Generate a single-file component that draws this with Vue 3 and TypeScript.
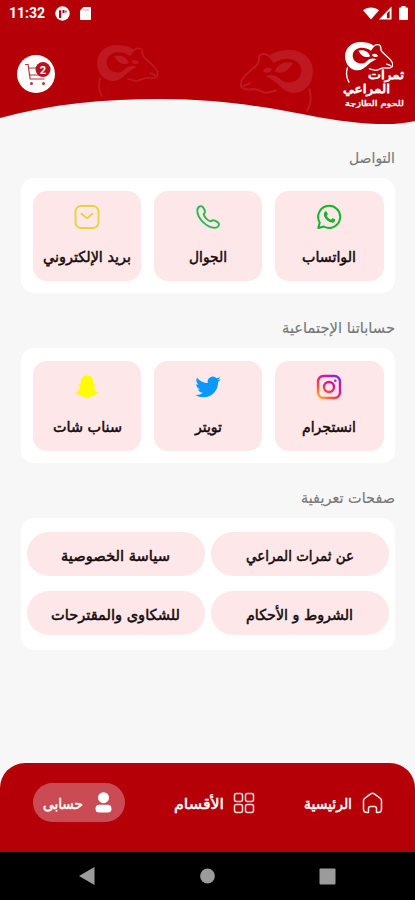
<script setup lang="ts">
import { h, type FunctionalComponent } from 'vue'

interface LabelProps {
  text: string
  w: number
  size?: number
}

// Single-line Arabic label fitted to a fixed advance width; baseline sits 14px below its top.
const Label: FunctionalComponent<LabelProps> = (props) =>
  h('svg', { class: 'label', width: props.w, height: 20, 'aria-label': props.text }, [
    h(
      'text',
      {
        x: props.w / 2,
        y: 14,
        'text-anchor': 'middle',
        'font-size': props.size ?? 15,
        textLength: props.w,
        lengthAdjust: 'spacingAndGlyphs',
      },
      props.text,
    ),
  ])
Label.props = ['text', 'w', 'size']

interface Tile {
  icon: string
  text: string
  w: number
}

const sections: { title: string; w: number; tiles: Tile[] }[] = [
  {
    title: 'التواصل',
    w: 46,
    tiles: [
      { icon: 'whatsapp', text: 'الواتساب', w: 54 },
      { icon: 'phone', text: 'الجوال', w: 38 },
      { icon: 'mail', text: 'بريد الإلكتروني', w: 88 },
    ],
  },
  {
    title: 'حساباتنا الإجتماعية',
    w: 113,
    tiles: [
      { icon: 'instagram', text: 'انستجرام', w: 54 },
      { icon: 'twitter', text: 'تويتر', w: 27 },
      { icon: 'snapchat', text: 'سناب شات', w: 69 },
    ],
  },
]

const pages = [
  { text: 'عن ثمرات المراعي', w: 108 },
  { text: 'سياسة الخصوصية', w: 109 },
  { text: 'الشروط و الأحكام', w: 107 },
  { text: 'للشكاوى والمقترحات', w: 129 },
]
</script>

<template>
  <div class="screen" dir="rtl">
    <header class="header">
      <svg class="backdrop" width="415" height="126" viewBox="0 0 415 126">
        <defs>
          <g id="ram">
            <path
              fill="currentColor"
              d="M36 4C31 1 26 0 20 0C8 0 0 8 0 18C0 28 7 36 16 36C26 36 29 26 40 22C35 20 31 21 28 24C25 27 22 28 18 27C12 26 9 21 10 15C12 8 22 4 33 11C35 9 36 7 36 4Z"
            />
            <path fill="currentColor" d="M17 11C24 9 30 12 32 18C26 21 21 18 17 11ZM34 16C38 14 41 15 42 18C39 20 36 19 34 16Z" />
            <path
              fill="none"
              stroke="currentColor"
              stroke-width="1.700"
              stroke-linecap="round"
              stroke-linejoin="round"
              d="M35 7C38 3 43 2 45 5L46 11C50 17 57 19 60 26C62 31 59 34 52 33C45 32 44 36 39 36L31 34M53 28L58 30M3 33C1 40 2 46 5 51"
            />
          </g>
        </defs>
        <path fill="#b50007" d="M0 0H415V121C395 126 365 125 320 117.500C270 108 225 99 160 99C105 99 50 104 0 118Z" />
        <use href="#ram" class="faint" transform="translate(97 45)" />
        <use href="#ram" class="faint" transform="translate(313 50) scale(-1.19 1.19)" />
      </svg>

      <div class="status" dir="ltr">
        <span class="clock">11:32</span>
        <svg width="15" height="15" viewBox="0 0 15 15">
          <circle cx="7.500" cy="7.500" r="7.200" fill="#fff" />
          <path fill="#b50007" d="M4 4.300H6.200V12H4ZM7.500 4H9.500V7H7.500ZM10.300 4.500H11.500V6.500H10.300Z" />
        </svg>
        <svg class="sd" width="11" height="13" viewBox="0 0 11 13">
          <path fill="#fff" d="M3.500 0H10Q11 0 11 1V12Q11 13 10 13H1Q0 13 0 12V3.500Z" />
          <path stroke="#b50007" stroke-opacity=".5" stroke-width=".8" d="M4 2V4M6 2V4M8 2V4" />
        </svg>
        <svg class="wifi" width="16" height="13" viewBox="0 0 17 13">
          <path fill="#fff" d="M0 3C5-1 12-1 17 3L8.500 13Z" />
        </svg>
        <svg class="signal" width="13" height="14" viewBox="0 0 14 14">
          <path fill="#fff" fill-rule="evenodd" d="M0 14L13.500 0V14ZM8.500 7.500V12.700H11.500V4.300Z" />
        </svg>
        <svg class="battery" width="9" height="14" viewBox="0 0 9 14">
          <path fill="#fff" d="M2.500 0H6.500V1.500H8Q9 1.500 9 2.500V13Q9 14 8 14H1Q0 14 0 13V2.500Q0 1.500 1 1.500H2.500Z" />
        </svg>
      </div>

      <div class="brand">
        <div class="logo">
          <svg class="logo-ram" width="48" height="41" viewBox="0 0 61 52">
            <use href="#ram" />
          </svg>
          <div class="logo-words">
            <Label class="word word-a" text="ثمرات" :w="36" :size="11.5" />
            <Label class="word word-b" text="المراعي" :w="47" :size="12" />
            <Label class="word word-c" text="للحوم الطازجة" :w="59" :size="8" />
          </div>
        </div>
        <div class="cart">
          <svg width="38" height="38" viewBox="0 0 38 38">
            <g fill="none" stroke="#b8323a" stroke-width="1.200">
              <path d="M8 9.500H11L13.200 24H27.500M12 13H19M12.500 20H27" />
            </g>
            <circle cx="14.500" cy="28.500" r="1.500" fill="#b8323a" />
            <circle cx="26.500" cy="28.500" r="1.500" fill="#b8323a" />
            <circle cx="26" cy="14.500" r="7.500" fill="#b5121d" />
            <text x="26" y="18.500" text-anchor="middle" class="count">2</text>
          </svg>
        </div>
      </div>
    </header>

    <main class="main">
      <section v-for="s in sections" :key="s.title" class="section">
        <Label class="title" :text="s.title" :w="s.w" />
        <div class="card tiles">
          <div v-for="t in s.tiles" :key="t.icon" class="tile">
            <svg class="icon" width="26" height="26" viewBox="0 0 26 26" fill="none">
              <g v-if="t.icon === 'whatsapp'">
                <path
                  stroke="#16b52c"
                  stroke-width="2"
                  stroke-linejoin="round"
                  d="M2.300 24L3.700 18.500A11 11 0 1 1 7.800 22.500Z"
                />
                <path
                  fill="#16b52c"
                  d="M8.300 8.500C9.200 6.900 10.400 7 10.900 8L11.700 10C11.900 10.700 11.100 11.300 10.700 11.800C11.700 13.700 13 14.900 15 15.700L16.300 14.300C16.800 13.900 18.500 15 19 15.300C19.700 15.900 19 17.800 17.500 18.400C15.700 19.300 12.300 17.700 10.300 15.600C8.100 13.300 7.200 10.700 8.300 8.500Z"
                />
              </g>
              <path
                v-else-if="t.icon === 'phone'"
                stroke="#2cb94c"
                stroke-width="1.900"
                stroke-linejoin="round"
                d="M2.300 6.500C2.300 3.800 4.300 2 6 2.100C8 2.200 8.700 3.800 9.800 6.300C10.400 7.900 9.900 9 8.700 10.200C9.300 13.200 12.700 16.700 15.900 17.400C17.100 16.200 18.200 15.900 19.800 16.600C22.400 17.700 24 18.400 24 20.300C23.900 22.200 22 23.900 19.500 23.900C12 23.900 2.300 14.500 2.300 6.500Z"
              />
              <g v-else-if="t.icon === 'mail'" stroke="#ead33a" stroke-width="1.900" stroke-linecap="round">
                <rect x="1.500" y="2" width="23" height="22" rx="5.500" />
                <path d="M7.500 9.700L12 13.600Q13 14.500 14 13.600L18.500 9.700" />
              </g>
              <g v-else-if="t.icon === 'instagram'" stroke="url(#insta)">
                <defs>
                  <linearGradient id="insta" gradientUnits="userSpaceOnUse" x1="3" y1="25" x2="22" y2="1">
                    <stop offset="0" stop-color="#ffc02c" />
                    <stop offset=".3" stop-color="#ff4a46" />
                    <stop offset=".6" stop-color="#e5148c" />
                    <stop offset="1" stop-color="#7a2ce8" />
                  </linearGradient>
                </defs>
                <rect x="2" y="2" width="22" height="22" rx="5.500" stroke-width="2.400" />
                <circle cx="13" cy="13" r="5" stroke-width="2.400" />
                <circle cx="19.300" cy="6.700" r="1.300" fill="#b421c4" stroke="none" />
              </g>
              <path
                v-else-if="t.icon === 'twitter'"
                fill="#0a98ff"
                transform="translate(.3 .3) scale(1.060)"
                d="M23.953 4.570a10 10 0 01-2.825.775 4.958 4.958 0 002.163-2.723c-.951.555-2.005.959-3.127 1.184a4.920 4.920 0 00-8.384 4.482C7.690 8.095 4.067 6.130 1.640 3.162a4.822 4.822 0 00-.666 2.475c0 1.710.870 3.213 2.188 4.096a4.904 4.904 0 01-2.228-.616v.060a4.923 4.923 0 003.946 4.827 4.996 4.996 0 01-2.212.085 4.936 4.936 0 004.604 3.417 9.867 9.867 0 01-6.102 2.105c-.390 0-.779-.023-1.170-.067a13.995 13.995 0 007.557 2.209c9.053 0 13.998-7.496 13.998-13.985 0-.210 0-.420-.015-.630A9.935 9.935 0 0024 4.590z"
              />
              <path
                v-else
                fill="#fffc00"
                d="M13 1.500C17 1.500 19.300 4.200 19.300 7.800V10.500L21.300 10.300C22.300 10.800 21.500 11.800 19.700 12.600C19.500 15.300 21.700 17.700 24.500 18.500C24.800 19.600 23 20 21.500 20.300L21 21.900C19 21.500 17.800 21.700 16.500 22.800C14.500 24.700 11.500 24.700 9.500 22.800C8.200 21.700 7 21.500 5 21.900L4.500 20.300C3 20 1.200 19.600 1.500 18.500C4.300 17.700 6.500 15.300 6.300 12.600C4.500 11.800 3.700 10.800 4.700 10.300L6.700 10.500V7.800C6.700 4.200 9 1.500 13 1.500Z"
              />
            </svg>
            <Label :text="t.text" :w="t.w" />
          </div>
        </div>
      </section>

      <section class="section">
        <Label class="title" text="صفحات تعريفية" :w="94" />
        <div class="card pages">
          <div v-for="p in pages" :key="p.text" class="pill"><Label :text="p.text" :w="p.w" /></div>
        </div>
      </section>
    </main>

    <nav class="nav">
      <div class="nav-item home">
        <svg width="21" height="22" viewBox="0 0 21 22" fill="none" stroke="#ffe9e9" stroke-width="1.500" stroke-linejoin="round">
          <path d="M1.500 8.500Q1.500 7.300 2.500 6.500L9 1.700Q10.500 .7 12 1.700L18.500 6.500Q19.500 7.300 19.500 8.500V17Q19.500 20.500 16 20.500H14.500V16.500Q14.500 14.500 12.500 14.500H8.500Q6.500 14.500 6.500 16.500V20.500H5Q1.500 20.500 1.500 17Z" />
        </svg>
        <Label text="الرئيسية" :w="48" />
      </div>
      <div class="nav-item categories">
        <svg width="22" height="22" viewBox="0 0 22 22" fill="none" stroke="#ffdcdc" stroke-width="1.500">
          <rect x="1.500" y="1.500" width="8" height="8" rx="2" />
          <rect x="12.500" y="1.500" width="8" height="8" rx="2" />
          <rect x="1.500" y="12.500" width="8" height="8" rx="2" />
          <rect x="12.500" y="12.500" width="8" height="8" rx="2" />
        </svg>
        <Label text="الأقسام" :w="50" />
      </div>
      <div class="nav-item active">
        <svg width="17" height="21" viewBox="0 0 17 21" fill="#fff">
          <circle cx="8.500" cy="5.700" r="5.500" />
          <rect x=".5" y="12.800" width="16" height="7.700" rx="3.850" />
        </svg>
        <Label text="حسابى" :w="40" />
      </div>
    </nav>

    <footer class="system" dir="ltr">
      <svg width="16" height="18" viewBox="0 0 16 18"><path fill="#9b9b9b" d="M0 9L15.500 0V18Z" /></svg>
      <svg width="16" height="16" viewBox="0 0 16 16"><circle cx="8.500" cy="8" r="7.400" fill="#9b9b9b" /></svg>
      <svg width="17" height="17" viewBox="0 0 17 17"><rect x=".5" y=".5" width="16" height="16" rx="1" fill="#9b9b9b" /></svg>
    </footer>
  </div>
</template>

<style>
body {
  margin: 0;
  background: #f7f7f7;
}
</style>

<style scoped>
.screen {
  display: flex;
  flex-direction: column;
  width: 415px;
  height: 900px;
  overflow: hidden;
  background: #f7f7f7;
  font-family: 'DejaVu Sans', sans-serif;
}
svg {
  display: block;
  flex: none;
}
.label {
  overflow: visible;
  direction: rtl;
  fill: #16090b;
  stroke: #16090b;
  stroke-width: 0.5px;
}
.header {
  position: relative;
  flex: none;
  height: 124px;
}
.backdrop {
  position: absolute;
  left: 0;
  top: 0;
}
.faint {
  color: #be1820;
}
.status {
  position: relative;
  display: flex;
  align-items: center;
  height: 26px;
  padding: 0 7px 0 9px;
}
.clock {
  width: 46px;
  font: 700 14px Roboto, sans-serif;
  color: #fff;
}
.sd {
  margin-left: 10px;
}
.wifi {
  margin-left: auto;
}
.battery {
  margin-left: 7px;
}
.brand {
  position: relative;
  display: flex;
  justify-content: space-between;
  height: 84px;
  padding: 0 11px 0 17px;
}
.logo {
  position: relative;
  width: 61px;
  color: #fff;
}
.logo-ram {
  position: absolute;
  left: 2px;
  top: 16px;
}
.logo-words {
  position: absolute;
  inset: 0;
}
.word {
  position: absolute;
  fill: #fff;
  stroke: #fff;
  stroke-width: 0.8px;
}
.word-a {
  top: 39px;
  right: 0;
}
.word-b {
  top: 53px;
  right: 14px;
}
.word-c {
  top: 66px;
  right: 0;
  stroke-width: 0.4px;
}
.cart {
  align-self: flex-start;
  margin-top: 29px;
  width: 38px;
  height: 38px;
  border-radius: 50%;
  background: #fff;
}
.count {
  font: 700 11px Roboto, sans-serif;
  fill: #fff;
}
.main {
  display: flex;
  flex: 1;
  flex-direction: column;
  gap: 26px;
  padding: 25px 20px 0 20.5px;
}
.section {
  display: flex;
  flex-direction: column;
  gap: 9px;
}
.title {
  fill: #777;
  stroke: #777;
  stroke-width: 0.15px;
}
.card {
  box-sizing: border-box;
  border-radius: 13px;
  background: #fff;
}
.tiles {
  display: grid;
  grid-template-columns: repeat(3, 1fr);
  gap: 13px;
  height: 115px;
  padding: 12.500px 11.500px 12px 12.500px;
}
.tile {
  display: flex;
  flex-direction: column;
  align-items: center;
  gap: 18px;
  padding-top: 13.500px;
  border-radius: 14px;
  background: #fde7e8;
}
.pages {
  display: grid;
  grid-template-columns: repeat(2, 1fr);
  grid-auto-rows: 44.500px;
  gap: 14.500px 6px;
  height: 132px;
  padding: 13.500px 6px;
}
.pill {
  display: flex;
  justify-content: center;
  padding-top: 15.500px;
  box-sizing: border-box;
  border-radius: 23px;
  background: #fde7e8;
}
.nav {
  display: flex;
  align-items: flex-start;
  justify-content: space-between;
  box-sizing: border-box;
  height: 89px;
  padding: 20px 32px 0 33px;
  border-radius: 25px 25px 0 0;
  background: #b50007;
}
.nav-item {
  display: flex;
  align-items: center;
  height: 39px;
  gap: 9px;
}
.nav-item .label {
  fill: #fff;
  stroke: #fff;
  margin-top: 5px;
}
.home {
  gap: 10px;
}
.active {
  box-sizing: border-box;
  width: 92px;
  padding: 0 13px 0 10px;
  gap: 12px;
  border-radius: 20px;
  background: #ca4b54;
}
.system {
  display: flex;
  align-items: center;
  justify-content: space-between;
  height: 48px;
  padding: 0 79px;
  background: #000;
}
</style>
